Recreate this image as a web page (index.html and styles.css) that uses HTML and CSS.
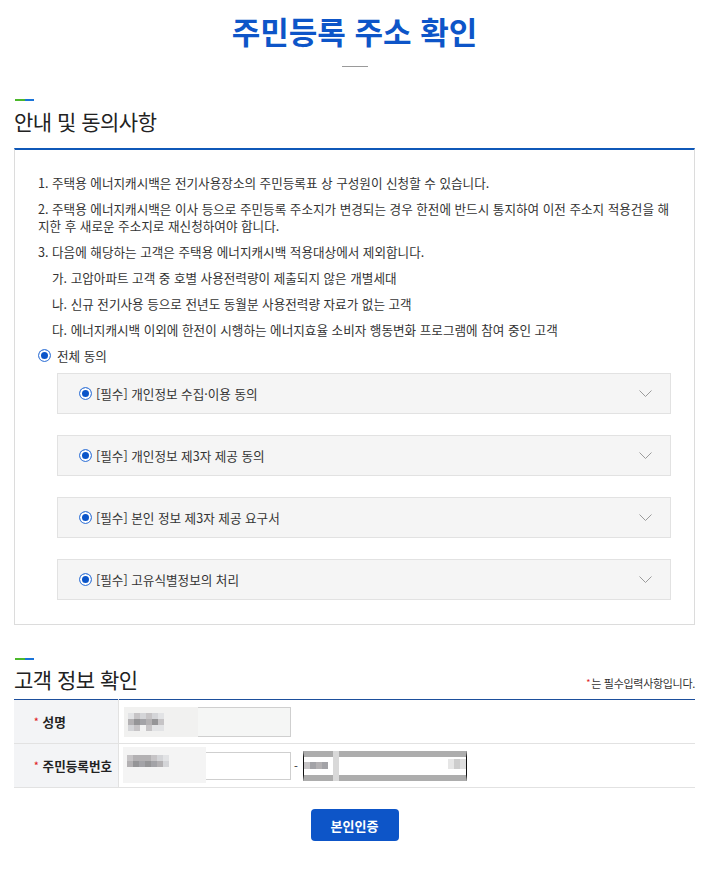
FILE: index.html
```html
<!DOCTYPE html>
<html lang="ko">
<head>
    <meta charset="UTF-8">
    <meta name="viewport" content="width=device-width, initial-scale=1.0">
    <title>주민등록 주소 확인</title>
    <link rel="stylesheet" href="styles.css">
</head>
<body>
    <div class="page">
        <h1 class="page-title">주민등록 주소 확인</h1>
        <div class="title-rule"></div>

        <!-- 안내 및 동의사항 -->
        <div class="sec-head">
            <h2 class="sec-title">안내 및 동의사항</h2>
        </div>
        <div class="agree-box">
            <ul class="notice">
                <li>1. 주택용 에너지캐시백은 전기사용장소의 주민등록표 상 구성원이 신청할 수 있습니다.</li>
                <li>2. 주택용 에너지캐시백은 이사 등으로 주민등록 주소지가 변경되는 경우 한전에 반드시 통지하여 이전 주소지 적용건을 해지한 후 새로운 주소지로 재신청하여야 합니다.</li>
                <li>3. 다음에 해당하는 고객은 주택용 에너지캐시백 적용대상에서 제외합니다.</li>
                <li class="sub">가. 고압아파트 고객 중 호별 사용전력량이 제출되지 않은 개별세대</li>
                <li class="sub">나. 신규 전기사용 등으로 전년도 동월분 사용전력량 자료가 없는 고객</li>
                <li class="sub">다. 에너지캐시백 이외에 한전이 시행하는 에너지효율 소비자 행동변화 프로그램에 참여 중인 고객</li>
            </ul>
            <div class="agree-all"><span class="radio"></span>전체 동의</div>
            <ul class="terms">
                <li class="term">
                    <span class="radio"></span>
                    <span class="term-name">[필수] 개인정보 수집·이용 동의</span>
                    <svg class="chev" width="13" height="7" viewBox="0 0 13 7"><polyline points="0.5,0.5 6.5,6.5 12.5,0.5" /></svg>
                </li>
                <li class="term">
                    <span class="radio"></span>
                    <span class="term-name">[필수] 개인정보 제3자 제공 동의</span>
                    <svg class="chev" width="13" height="7" viewBox="0 0 13 7"><polyline points="0.5,0.5 6.5,6.5 12.5,0.5" /></svg>
                </li>
                <li class="term">
                    <span class="radio"></span>
                    <span class="term-name">[필수] 본인 정보 제3자 제공 요구서</span>
                    <svg class="chev" width="13" height="7" viewBox="0 0 13 7"><polyline points="0.5,0.5 6.5,6.5 12.5,0.5" /></svg>
                </li>
                <li class="term">
                    <span class="radio"></span>
                    <span class="term-name">[필수] 고유식별정보의 처리</span>
                    <svg class="chev" width="13" height="7" viewBox="0 0 13 7"><polyline points="0.5,0.5 6.5,6.5 12.5,0.5" /></svg>
                </li>
            </ul>
        </div>

        <!-- 고객 정보 확인 -->
        <div class="sec-head sec-head--form">
            <div class="sec-head-row">
                <h2 class="sec-title">고객 정보 확인</h2>
                <p class="req-note"><span class="req">*</span>는 필수입력사항입니다.</p>
            </div>
        </div>
        <table class="form-table">
            <tr>
                <th><span class="req">*</span>성명</th>
                <td>
                    <div class="field field--name">
                        <div class="mosaic mosaic--name">
                            <span class="m1"></span><span class="m3"></span><span class="m2"></span><span class="m3"></span><span class="m2"></span><span class="m1"></span>
                            <span class="m4"></span><span class="m6"></span><span class="m5"></span><span class="m4"></span><span class="m6"></span><span class="m3"></span>
                            <span class="m2"></span><span class="m3"></span><span class="m0"></span><span class="m3"></span><span class="m1"></span><span class="m1"></span>
                        </div>
                    </div>
                </td>
            </tr>
            <tr>
                <th><span class="req">*</span>주민등록번호</th>
                <td>
                    <div class="field-row">
                        <div class="field">
                            <div class="mosaic mosaic--birth">
                                <span class="m3"></span><span class="m4"></span><span class="m4"></span><span class="m4"></span><span class="m3"></span><span class="m2"></span><span class="m1"></span>
                                <span class="m4"></span><span class="m6"></span><span class="m5"></span><span class="m6"></span><span class="m5"></span><span class="m4"></span><span class="m2"></span>
                            </div>
                        </div>
                        <span class="dash">-</span>
                        <div class="field field--masked">
                            <div class="mask-cells">
                                <span class="m3"></span><span class="m5"></span><span class="m4"></span><span class="m5"></span>
                            </div>
                            <span class="mask-col"></span>
                            <span class="mask-right"></span>
                        </div>
                    </div>
                </td>
            </tr>
        </table>

        <div class="btn-area">
            <button class="btn-auth">본인인증</button>
        </div>
    </div>
</body>
</html>
```

FILE: styles.css
```css
* {
    margin: 0;
    padding: 0;
    box-sizing: border-box;
}

body {
    font-family: "Noto Sans CJK KR", "Noto Sans", sans-serif;
    color: #333;
    background: #fff;
}

ul {
    list-style: none;
}

.page {
    padding: 0 9px 0 14px;
}

/* 타이틀 */
.page-title {
    padding-top: 12px;
    font-size: 31px;
    line-height: 38px;
    font-weight: 700;
    letter-spacing: 0;
    text-align: center;
    color: #0d55c8;
}

.title-rule {
    width: 26px;
    height: 1px;
    margin: 16px auto 0;
    background: #9a9a9a;
}

/* 섹션 헤더 */
.sec-head {
    margin-top: 32px;
}

.sec-head::before {
    content: "";
    display: block;
    width: 19px;
    height: 2px;
    margin-left: 1px;
    background: linear-gradient(90deg, #4cb82c 50%, #1a74d8 50%);
}

.sec-title {
    margin-top: 6px;
    font-size: 21px;
    line-height: 28px;
    font-weight: 400;
    letter-spacing: -0.5px;
    color: #222;
}

.sec-head--form {
    margin-top: 33px;
}

.sec-head-row {
    display: flex;
    justify-content: space-between;
    align-items: flex-end;
}

.sec-head--form .sec-title {
    margin-top: 5px;
}

.req-note {
    font-size: 11px;
    line-height: 16px;
    padding-bottom: 2px;
    letter-spacing: -0.3px;
    color: #333;
}

.req {
    color: #e0242a;
    font-size: 9px;
    margin-right: 4px;
    vertical-align: 2px;
}

.req-note .req {
    margin-right: 1px;
}

/* 동의 박스 */
.agree-box {
    margin-top: 13px;
    padding: 24px 23px 24px 23px;
    border: 1px solid #dcdcdc;
    border-top: 2px solid #0f58b8;
}

.notice {
    margin-right: -6px;
    font-size: 12.6px;
    line-height: 17px;
    color: #333;
}

.notice li {
    margin-bottom: 9px;
}

.notice .sub {
    padding-left: 14px;
}

.radio {
    display: inline-block;
    flex-shrink: 0;
    width: 13px;
    height: 13px;
    border: 1px solid #4a83dc;
    border-radius: 50%;
    background: #0b55c9;
    box-shadow: inset 0 0 0 2px #fff;
}

.agree-all {
    display: flex;
    align-items: center;
    gap: 6px;
    font-size: 12.6px;
    line-height: 17px;
    color: #333;
}

.terms {
    margin: 9px 0 0 19px;
    display: flex;
    flex-direction: column;
    gap: 21px;
}

.term {
    display: flex;
    align-items: center;
    gap: 4px;
    height: 41px;
    padding: 0 18px 0 21px;
    background: #f5f5f5;
    border: 1px solid #e2e2e2;
    font-size: 12.6px;
    color: #333;
}

.term-name {
    flex: 1;
}

.chev {
    fill: none;
    stroke: #9b9b9b;
    stroke-width: 1;
}

/* 고객 정보 테이블 */
.form-table {
    width: 100%;
    margin-top: 6px;
    border-collapse: collapse;
    border-top: 1px solid #1d4f9c;
}

.form-table th,
.form-table td {
    height: 44px;
    border-bottom: 1px solid #e2e2e2;
}

.form-table th {
    width: 104px;
    padding-left: 20px;
    background: #f3f4f6;
    border-right: 1px solid #e2e2e2;
    text-align: left;
    font-size: 12.6px;
    font-weight: 700;
    color: #222;
    white-space: nowrap;
}

.form-table td {
    padding-left: 6px;
}

.field-row {
    display: flex;
    align-items: center;
}

.field {
    position: relative;
    width: 166px;
    height: 28px;
    border: 1px solid #cfcfcf;
    background: #fff;
}

.field--name {
    height: 30px;
    background: #f5f6f5;
}

.dash {
    width: 11px;
    text-align: center;
    font-size: 11px;
    color: #222;
}

/* 모자이크 처리 */
.mosaic {
    position: absolute;
    display: grid;
    grid-template-columns: repeat(6, 6px);
    grid-auto-rows: 6px;
    background: #f1f1f0;
}

.mosaic--name {
    left: -2px;
    top: -1px;
    width: 74px;
    height: 30px;
    padding: 6px 0 0 4px;
}

.mosaic--birth {
    left: -3px;
    top: -6px;
    width: 83px;
    height: 36px;
    padding: 8px 0 0 4px;
    grid-template-columns: repeat(7, 6px);
    background: #f4f4f4;
}

.m0 { background: #f2f2f2; }
.m1 { background: #e2e3e5; }
.m2 { background: #d4d5d8; }
.m3 { background: #c6c4c6; }
.m4 { background: #b3b1b3; }
.m5 { background: #a3a3a7; }
.m6 { background: #959597; }

.field--masked {
    width: 164px;
    height: 30px;
    margin-left: 1px;
    border: none;
    border-top: 6px solid #adadad;
    border-bottom: 6px solid #adadad;
    border-left: 1px solid #111;
    border-right: 1px solid #111;
    background: #fff;
}

.mask-cells {
    position: absolute;
    left: 0;
    top: 5px;
    display: flex;
}

.mask-cells span {
    width: 6px;
    height: 7px;
}

.mask-col {
    position: absolute;
    left: 29px;
    top: -6px;
    bottom: -6px;
    width: 6px;
    background: #d9d9d9;
}

.mask-right {
    position: absolute;
    right: 0;
    top: 2px;
    width: 18px;
    height: 10px;
    background: linear-gradient(90deg, #e6e6e6 33%, #cdcdcd 33%, #cdcdcd 66%, #dedede 66%);
}

/* 버튼 */
.btn-area {
    margin-top: 21px;
    text-align: center;
}

.btn-auth {
    width: 88px;
    height: 32px;
    border: none;
    border-radius: 4px;
    background: #0d55c8;
    color: #fff;
    font-family: inherit;
    font-size: 13px;
    font-weight: 700;
    cursor: pointer;
}
```
